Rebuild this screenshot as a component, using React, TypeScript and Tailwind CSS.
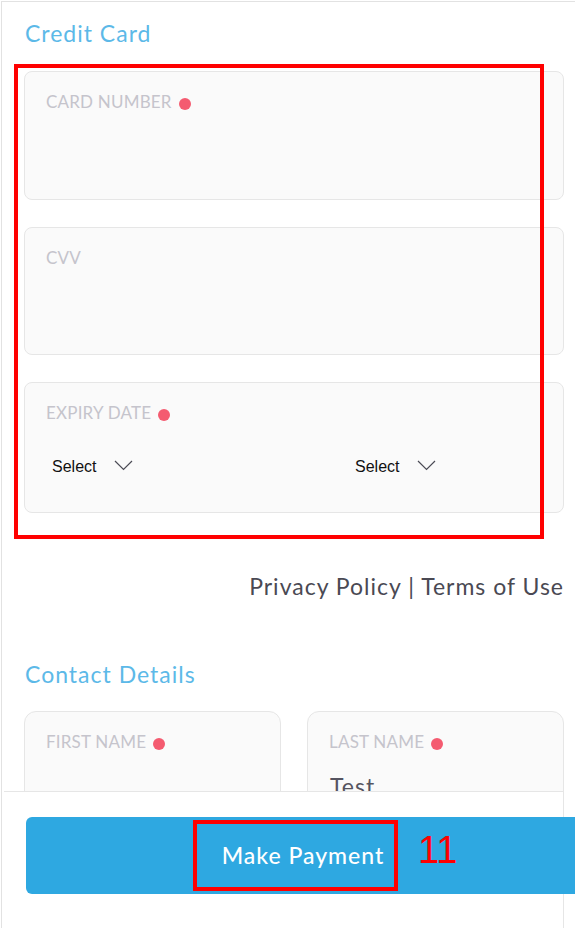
import React from 'react';

const headingFont = { fontFamily: 'Lato, "Open Sans", sans-serif' };

const RequiredDot = () => (
  <span className="ml-[7px] inline-block h-[12px] w-[12px] translate-y-[2px] rounded-full bg-[#f45b70]" />
);

const FieldLabel: React.FC<{ text: string; required?: boolean }> = ({ text, required }) => (
  <div className="flex items-center text-[17px] leading-[20px] tracking-[0.2px] text-[#c5c4cc] uppercase">
    {text}
    {required && <RequiredDot />}
  </div>
);

const Chevron = () => (
  <svg width="19" height="11" viewBox="0 0 19 11" fill="none" className="ml-[18px] -translate-y-[2px]">
    <path d="M1 1l8.5 8.5L18 1" stroke="#4b4b55" strokeWidth="1.2" />
  </svg>
);

const SelectBox: React.FC = () => (
  <div className="flex items-center text-[16px] text-[#111]" style={{ fontFamily: '"Liberation Sans", Arial, sans-serif' }}>
    Select
    <Chevron />
  </div>
);

const InputCard: React.FC<{ children: React.ReactNode; className?: string }> = ({ children, className }) => (
  <div className={`rounded-lg border border-[#e6e6e6] bg-[#fafafa] px-[21px] pt-[20px] ${className ?? ''}`}>
    {children}
  </div>
);

export default function App() {
  return (
    <div className="relative h-[928px] w-[575px] overflow-hidden bg-white" style={headingFont}>
      <div className="ml-[1px] mt-[1px] flex h-[927px] flex-col border-l border-t border-[#e2e2e2]">
        {/* scrolling form area */}
        <div className="h-[789px] overflow-hidden pl-[22px] pr-[11px]">
          <h2 className="mt-[17px] ml-[1px] text-[23px] leading-[28px] tracking-[1px] text-[#5cb9e8]">Credit Card</h2>

          <div className="mt-[24px] flex flex-col gap-[27px]">
            <InputCard className="h-[129px]">
              <FieldLabel text="Card Number" required />
            </InputCard>
            <InputCard className="h-[128px]">
              <FieldLabel text="CVV" />
            </InputCard>
            <InputCard className="h-[131px]">
              <FieldLabel text="Expiry Date" required />
              <div className="mt-[32px] grid grid-cols-2 pl-[6px]">
                <SelectBox />
                <div className="pl-[58px]">
                  <SelectBox />
                </div>
              </div>
            </InputCard>
          </div>

          <div className="mt-[59px] text-right text-[23px] leading-[28px] tracking-[1px] text-[#4a4953]">
            Privacy Policy | Terms of Use
          </div>

          <h2 className="mt-[60px] ml-[1px] text-[23px] leading-[28px] tracking-[1px] text-[#5cb9e8]">Contact Details</h2>

          <div className="mt-[23px] grid grid-cols-2 gap-[26px]">
            <div className="h-[140px] rounded-xl border border-[#e6e6e6] bg-[#fafafa] px-[21px] pt-[20px]">
              <FieldLabel text="First Name" required />
            </div>
            <div className="h-[140px] rounded-xl border border-[#e6e6e6] bg-[#fafafa] px-[21px] pt-[20px]">
              <FieldLabel text="Last Name" required />
              <div className="mt-[20px] pl-[1px] text-[23px] leading-[28px] tracking-[1px] text-[#555460]">Test</div>
            </div>
          </div>
        </div>

        {/* sticky footer with payment button */}
        <div className="ml-[2px] w-[560px] flex-1 border-r border-t border-[#e6e6e6]">
          <button className="ml-[22px] mt-[25px] flex h-[77px] w-[554px] items-center justify-center rounded-l-md bg-[#2ea8e1] text-[23px] font-medium tracking-[1px] text-white">
            Make Payment
          </button>
        </div>
      </div>

      {/* annotation overlays */}
      <div className="pointer-events-none absolute left-[14px] top-[64px] h-[475px] w-[530px] border-[4px] border-[#ff0000]" />
      <div className="pointer-events-none absolute left-[193px] top-[820px] h-[71px] w-[205px] border-[4px] border-[#ff0000]" />
      <div
        className="pointer-events-none absolute left-[418px] top-[828px] text-[38px] leading-[44px] text-[#ff0000]"
        style={{ fontFamily: '"Liberation Sans", Arial, sans-serif' }}
      >
        11
      </div>
    </div>
  );
}
